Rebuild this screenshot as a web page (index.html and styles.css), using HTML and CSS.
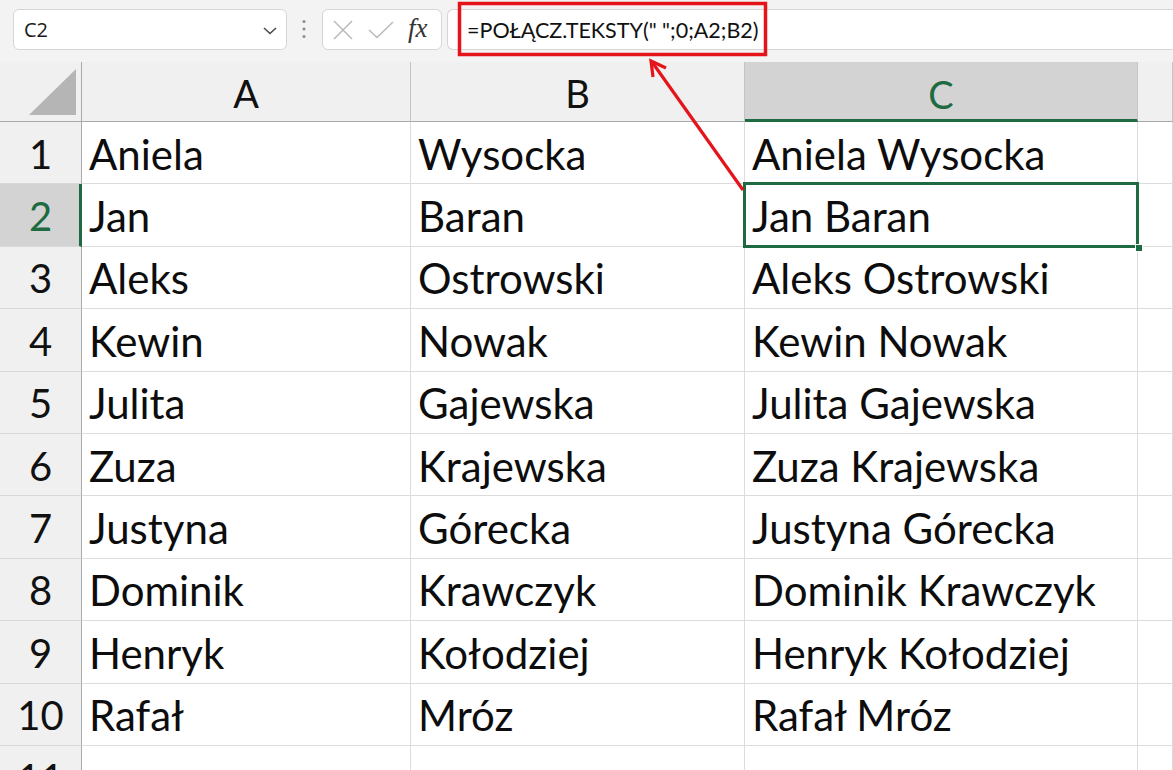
FILE: index.html
```html
<!DOCTYPE html>
<html lang="pl">
<head>
<meta charset="utf-8">
<title>Arkusz</title>
<link rel="stylesheet" href="styles.css">
</head>
<body>
<div class="app">
  <div class="topbar">
    <div class="namebox">
      <span class="namebox-text">C2</span>
      <svg class="chevron" width="14" height="8" viewBox="0 0 14 8"><path d="M1 1 L7 6.5 L13 1" fill="none" stroke="#4a4a4a" stroke-width="1.6"/></svg>
    </div>
    <svg class="dots" width="6" height="20" viewBox="0 0 6 20"><circle cx="3" cy="2.5" r="1.5" fill="#8a8a8a"/><circle cx="3" cy="10" r="1.5" fill="#8a8a8a"/><circle cx="3" cy="17.5" r="1.5" fill="#8a8a8a"/></svg>
    <div class="fxbox">
      <svg width="22" height="22" viewBox="0 0 22 22"><path d="M2 2 L20 20 M20 2 L2 20" stroke="#b9b9b9" stroke-width="1.5" fill="none"/></svg>
      <svg width="26" height="20" viewBox="0 0 26 20"><path d="M1 10 L9 17.5 L25 2" stroke="#b9b9b9" stroke-width="1.5" fill="none"/></svg>
      <span class="fx">fx</span>
    </div>
    <div class="formula">
      <span class="formula-text">=POŁĄCZ.TEKSTY(" ";0;A2;B2)</span>
    </div>
  </div>

  <div class="sheet">
    <div class="corner"><div class="tri"></div></div>
    <div class="colhead">A</div>
    <div class="colhead">B</div>
    <div class="colhead active">C</div>
    <div class="colhead"></div>

    <div class="rowhead">1</div><div class="cell">Aniela</div><div class="cell">Wysocka</div><div class="cell">Aniela Wysocka</div><div class="cell"></div>
    <div class="rowhead active">2</div><div class="cell">Jan</div><div class="cell">Baran</div><div class="cell selected">Jan Baran<span class="handle"></span></div><div class="cell"></div>
    <div class="rowhead">3</div><div class="cell">Aleks</div><div class="cell">Ostrowski</div><div class="cell">Aleks Ostrowski</div><div class="cell"></div>
    <div class="rowhead">4</div><div class="cell">Kewin</div><div class="cell">Nowak</div><div class="cell">Kewin Nowak</div><div class="cell"></div>
    <div class="rowhead">5</div><div class="cell">Julita</div><div class="cell">Gajewska</div><div class="cell">Julita Gajewska</div><div class="cell"></div>
    <div class="rowhead">6</div><div class="cell">Zuza</div><div class="cell">Krajewska</div><div class="cell">Zuza Krajewska</div><div class="cell"></div>
    <div class="rowhead">7</div><div class="cell">Justyna</div><div class="cell">Górecka</div><div class="cell">Justyna Górecka</div><div class="cell"></div>
    <div class="rowhead">8</div><div class="cell">Dominik</div><div class="cell">Krawczyk</div><div class="cell">Dominik Krawczyk</div><div class="cell"></div>
    <div class="rowhead">9</div><div class="cell">Henryk</div><div class="cell">Kołodziej</div><div class="cell">Henryk Kołodziej</div><div class="cell"></div>
    <div class="rowhead">10</div><div class="cell">Rafał</div><div class="cell">Mróz</div><div class="cell">Rafał Mróz</div><div class="cell"></div>
    <div class="rowhead">11</div><div class="cell"></div><div class="cell"></div><div class="cell"></div><div class="cell"></div>
  </div>

  <svg class="annotation" width="1173" height="770" viewBox="0 0 1173 770">
    <rect x="459.5" y="3.5" width="306" height="51" fill="none" stroke="#e5141b" stroke-width="3.5"/>
    <path d="M743 190 L652 62" stroke="#e5141b" stroke-width="3.2" fill="none"/>
    <path d="M666 68 L651 61 L653 77" stroke="#e5141b" stroke-width="3.2" fill="none" stroke-linejoin="miter"/>
  </svg>
</div>
</body>
</html>
```

FILE: styles.css
```css
* { box-sizing: border-box; }

html, body {
  margin: 0;
  padding: 0;
  background: #ffffff;
}

body {
  width: 1173px;
  height: 770px;
  overflow: hidden;
  font-family: "Lato", "Open Sans", sans-serif;
  color: #000;
}

.app {
  position: relative;
  width: 1173px;
  height: 770px;
}

/* ---------- top bar ---------- */
.topbar {
  height: 62px;
  background: #f3f3f3;
  display: flex;
  align-items: flex-start;
  padding-top: 9px;
}

.namebox {
  margin-left: 13px;
  width: 274px;
  height: 41px;
  background: #fff;
  border: 1px solid #d6d6d6;
  border-radius: 6px;
  display: flex;
  align-items: center;
  justify-content: space-between;
  padding: 0 9px 0 10px;
}

.namebox-text {
  font-family: "Open Sans", sans-serif;
  font-size: 20px;
  color: #1a1a1a;
}

.chevron { margin-top: 2px; }

.dots {
  margin: 10px 0 0 14px;
}

.fxbox {
  margin-left: 15px;
  width: 120px;
  height: 41px;
  background: #fff;
  border: 1px solid #d6d6d6;
  border-radius: 6px;
  display: flex;
  align-items: center;
  padding-left: 9px;
  gap: 14px;
}

.fx {
  font-family: "Liberation Serif", "DejaVu Serif", serif;
  font-style: italic;
  font-size: 27px;
  color: #333;
  margin-left: 0;
  margin-top: -2px;
}

.formula {
  margin-left: 5px;
  flex: 1;
  height: 41px;
  background: #fff;
  border: 1px solid #d6d6d6;
  border-right: none;
  border-radius: 6px 0 0 6px;
  display: flex;
  align-items: center;
  padding-left: 19px;
}

.formula-text {
  font-family: "Lato", sans-serif;
  font-size: 21.5px;
  color: #111;
}

/* ---------- sheet ---------- */
.sheet {
  display: grid;
  grid-template-columns: 82px 329px 334px 393px 1fr;
  grid-template-rows: 60px repeat(11, 62.4px);
}

.corner {
  background: #f0f0f0;
  border-right: 1px solid #a9a9a9;
  border-bottom: 1px solid #a9a9a9;
  display: flex;
  align-items: flex-end;
  justify-content: flex-end;
  padding: 0 5px 6px 0;
}

.tri {
  width: 47px;
  height: 46px;
  background: #b5b5b5;
  clip-path: polygon(100% 0, 100% 100%, 0 100%);
}

.colhead {
  background: #f0f0f0;
  border-right: 1px solid #c4c4c4;
  border-bottom: 1px solid #a9a9a9;
  display: flex;
  align-items: center;
  justify-content: center;
  padding-top: 3px;
  font-size: 38px;
  color: #111;
}

.colhead.active {
  background: #d3d3d3;
  color: #1e6b41;
  border-bottom: 3px solid #1e6b41;
  padding-top: 6px;
}

.rowhead {
  background: #f0f0f0;
  border-right: 1px solid #a9a9a9;
  border-bottom: 1px solid #d8d8d8;
  display: flex;
  align-items: center;
  justify-content: center;
  padding-top: 2px;
  font-size: 40px;
  color: #111;
}

.rowhead.active {
  background: #d3d3d3;
  color: #1e6b41;
  border-right: 3px solid #1e6b41;
  padding-left: 2px;
}

.cell {
  border-right: 1px solid #dcdcdc;
  border-bottom: 1px solid #dcdcdc;
  display: flex;
  align-items: center;
  padding: 2px 0 0 7px;
  font-size: 42px;
  white-space: nowrap;
  color: #0d0d0d;
}

.cell.selected {
  position: relative;
}

.cell.selected::after {
  content: "";
  position: absolute;
  left: -2px;
  top: -2px;
  right: -2px;
  bottom: -2px;
  border: 3px solid #1e6b41;
  pointer-events: none;
}

.handle {
  position: absolute;
  right: -6px;
  bottom: -6px;
  width: 8px;
  height: 8px;
  background: #1e6b41;
  border: 1px solid #fff;
  z-index: 2;
}

.annotation {
  position: absolute;
  left: 0;
  top: 0;
  pointer-events: none;
}
```
